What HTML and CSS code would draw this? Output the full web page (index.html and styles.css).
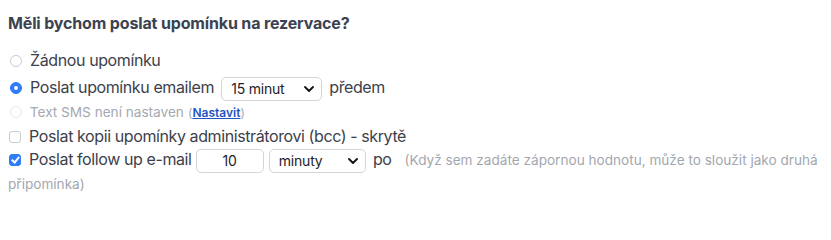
FILE: index.html
```html
<!DOCTYPE html>
<html lang="cs">
<head>
<meta charset="utf-8">
<link rel="stylesheet" href="styles.css">
</head>
<body>
<form class="reminders">
  <h3 class="title">Měli bychom poslat upomínku na rezervace?</h3>

  <div class="row row-none">
    <label class="opt"><input type="radio" name="rem" class="radio"> Žádnou upomínku</label>
  </div>

  <div class="row row-email">
    <label class="opt"><input type="radio" name="rem" class="radio" checked> Poslat upomínku emailem</label>
    <span class="select-wrap sel-before">
      <select class="select"><option>15 minut</option></select>
      <svg class="chev" viewBox="0 0 10 6" width="10" height="6"><path d="M1 1l4 4 4-4" fill="none" stroke="#111" stroke-width="1.8" stroke-linecap="round" stroke-linejoin="round"/></svg>
    </span>
    <span class="after">předem</span>
  </div>

  <div class="row row-sms">
    <label class="opt disabled"><input type="radio" name="rem" class="radio" disabled> Text SMS není nastaven</label>
    <span class="paren">(<a href="#" class="link">Nastavit</a>)</span>
  </div>

  <div class="row row-bcc">
    <label class="opt"><input type="checkbox" class="check"> Poslat kopii upomínky administrátorovi (bcc) - skrytě</label>
  </div>

  <div class="row row-follow">
    <label class="opt"><input type="checkbox" class="check" checked> Poslat follow up e-mail</label>
    <input type="text" class="num" value="10">
    <span class="select-wrap sel-unit">
      <select class="select"><option>minuty</option></select>
      <svg class="chev" viewBox="0 0 10 6" width="10" height="6"><path d="M1 1l4 4 4-4" fill="none" stroke="#111" stroke-width="1.8" stroke-linecap="round" stroke-linejoin="round"/></svg>
    </span>
    <span class="after">po</span>
    <span class="note">(Když sem zadáte zápornou hodnotu, může to sloužit jako druhá připomínka)</span>
  </div>
</form>
</body>
</html>
```

FILE: styles.css
```css
html, body {
  margin: 0;
  padding: 0;
  background: #ffffff;
}

body {
  padding: 8px;
  font-family: Inter, "Liberation Sans", Arial, sans-serif;
  color: #3c414b;
}

.reminders {
  margin: 0;
}

.title {
  margin: 6px 0 0;
  font-size: 16px;
  line-height: 19px;
  font-weight: 700;
  letter-spacing: -0.15px;
  color: #3b4250;
}

.row {
  font-size: 16px;
  line-height: 24px;
  letter-spacing: -0.4px;
}

.row-none {
  margin-top: 15px;
}

.row-email {
  margin-top: 3px;
}

.opt {
  cursor: default;
}

.opt.disabled {
  color: #a5a9b0;
  font-size: 13.6px;
  letter-spacing: 0;
}

.radio,
.check {
  -webkit-appearance: none;
  appearance: none;
  margin: 0 4px 0 2px;
  width: 12px;
  height: 12px;
  vertical-align: -1px;
  border: 1px solid #c9ccd1;
  background: #fff;
  position: relative;
}

.radio {
  border-radius: 50%;
}

.radio:checked {
  background: #2e7df6;
  border-color: #2e7df6;
}

.radio:checked::after {
  content: "";
  position: absolute;
  left: 3px;
  top: 3px;
  width: 4px;
  height: 4px;
  border-radius: 50%;
  background: #fff;
}

.radio:disabled {
  border-color: #e6e7ea;
}

.check {
  border-radius: 3px;
  margin-left: 1px;
}

.check:checked {
  background: #2e7df6;
  border-color: #2e7df6;
}

.check:checked::after {
  content: "";
  position: absolute;
  left: 3px;
  top: 0px;
  width: 3px;
  height: 6px;
  border: solid #fff;
  border-width: 0 2px 2px 0;
  transform: rotate(40deg);
}

.select-wrap {
  position: relative;
  display: inline-flex;
  vertical-align: middle;
  letter-spacing: 0;
}

.select {
  -webkit-appearance: none;
  appearance: none;
  height: 24px;
  border: 1px solid #d3d5d9;
  border-radius: 5px;
  background: #fff;
  font-family: inherit;
  font-size: 14px;
  letter-spacing: -0.2px;
  color: #1f2328;
  padding: 0 0 0 9px;
}

.sel-before {
  margin-left: 3px;
  margin-top: -2px;
  margin-bottom: -2px;
}

.sel-before .select {
  width: 101px;
}

.sel-unit {
  margin-left: 1px;
}

.sel-unit .select {
  width: 97px;
}

.chev {
  position: absolute;
  right: 8px;
  top: 9px;
  pointer-events: none;
}

.after {
  margin-left: 3px;
}

.row-sms {
  margin-top: 1px;
  line-height: 22px;
}

.paren {
  font-size: 12px;
  letter-spacing: 0;
  color: #a5a9b0;
}

.link {
  color: #1f55c4;
  font-weight: 600;
  text-decoration: underline;
}

.row-follow {
  margin-top: -1px;
}

.row-follow .select-wrap,
.row-follow .num {
  margin-top: -2px;
  margin-bottom: -2px;
}

.num {
  box-sizing: border-box;
  width: 68px;
  height: 24px;
  border: 1px solid #d3d5d9;
  border-radius: 5px;
  font-family: inherit;
  font-size: 14px;
  color: #1f2328;
  text-align: center;
  vertical-align: middle;
  margin-left: 0;
}

.note {
  margin-left: 9px;
  font-size: 13.6px;
  line-height: 16px;
  letter-spacing: 0;
  color: #a3a7ae;
}
```
